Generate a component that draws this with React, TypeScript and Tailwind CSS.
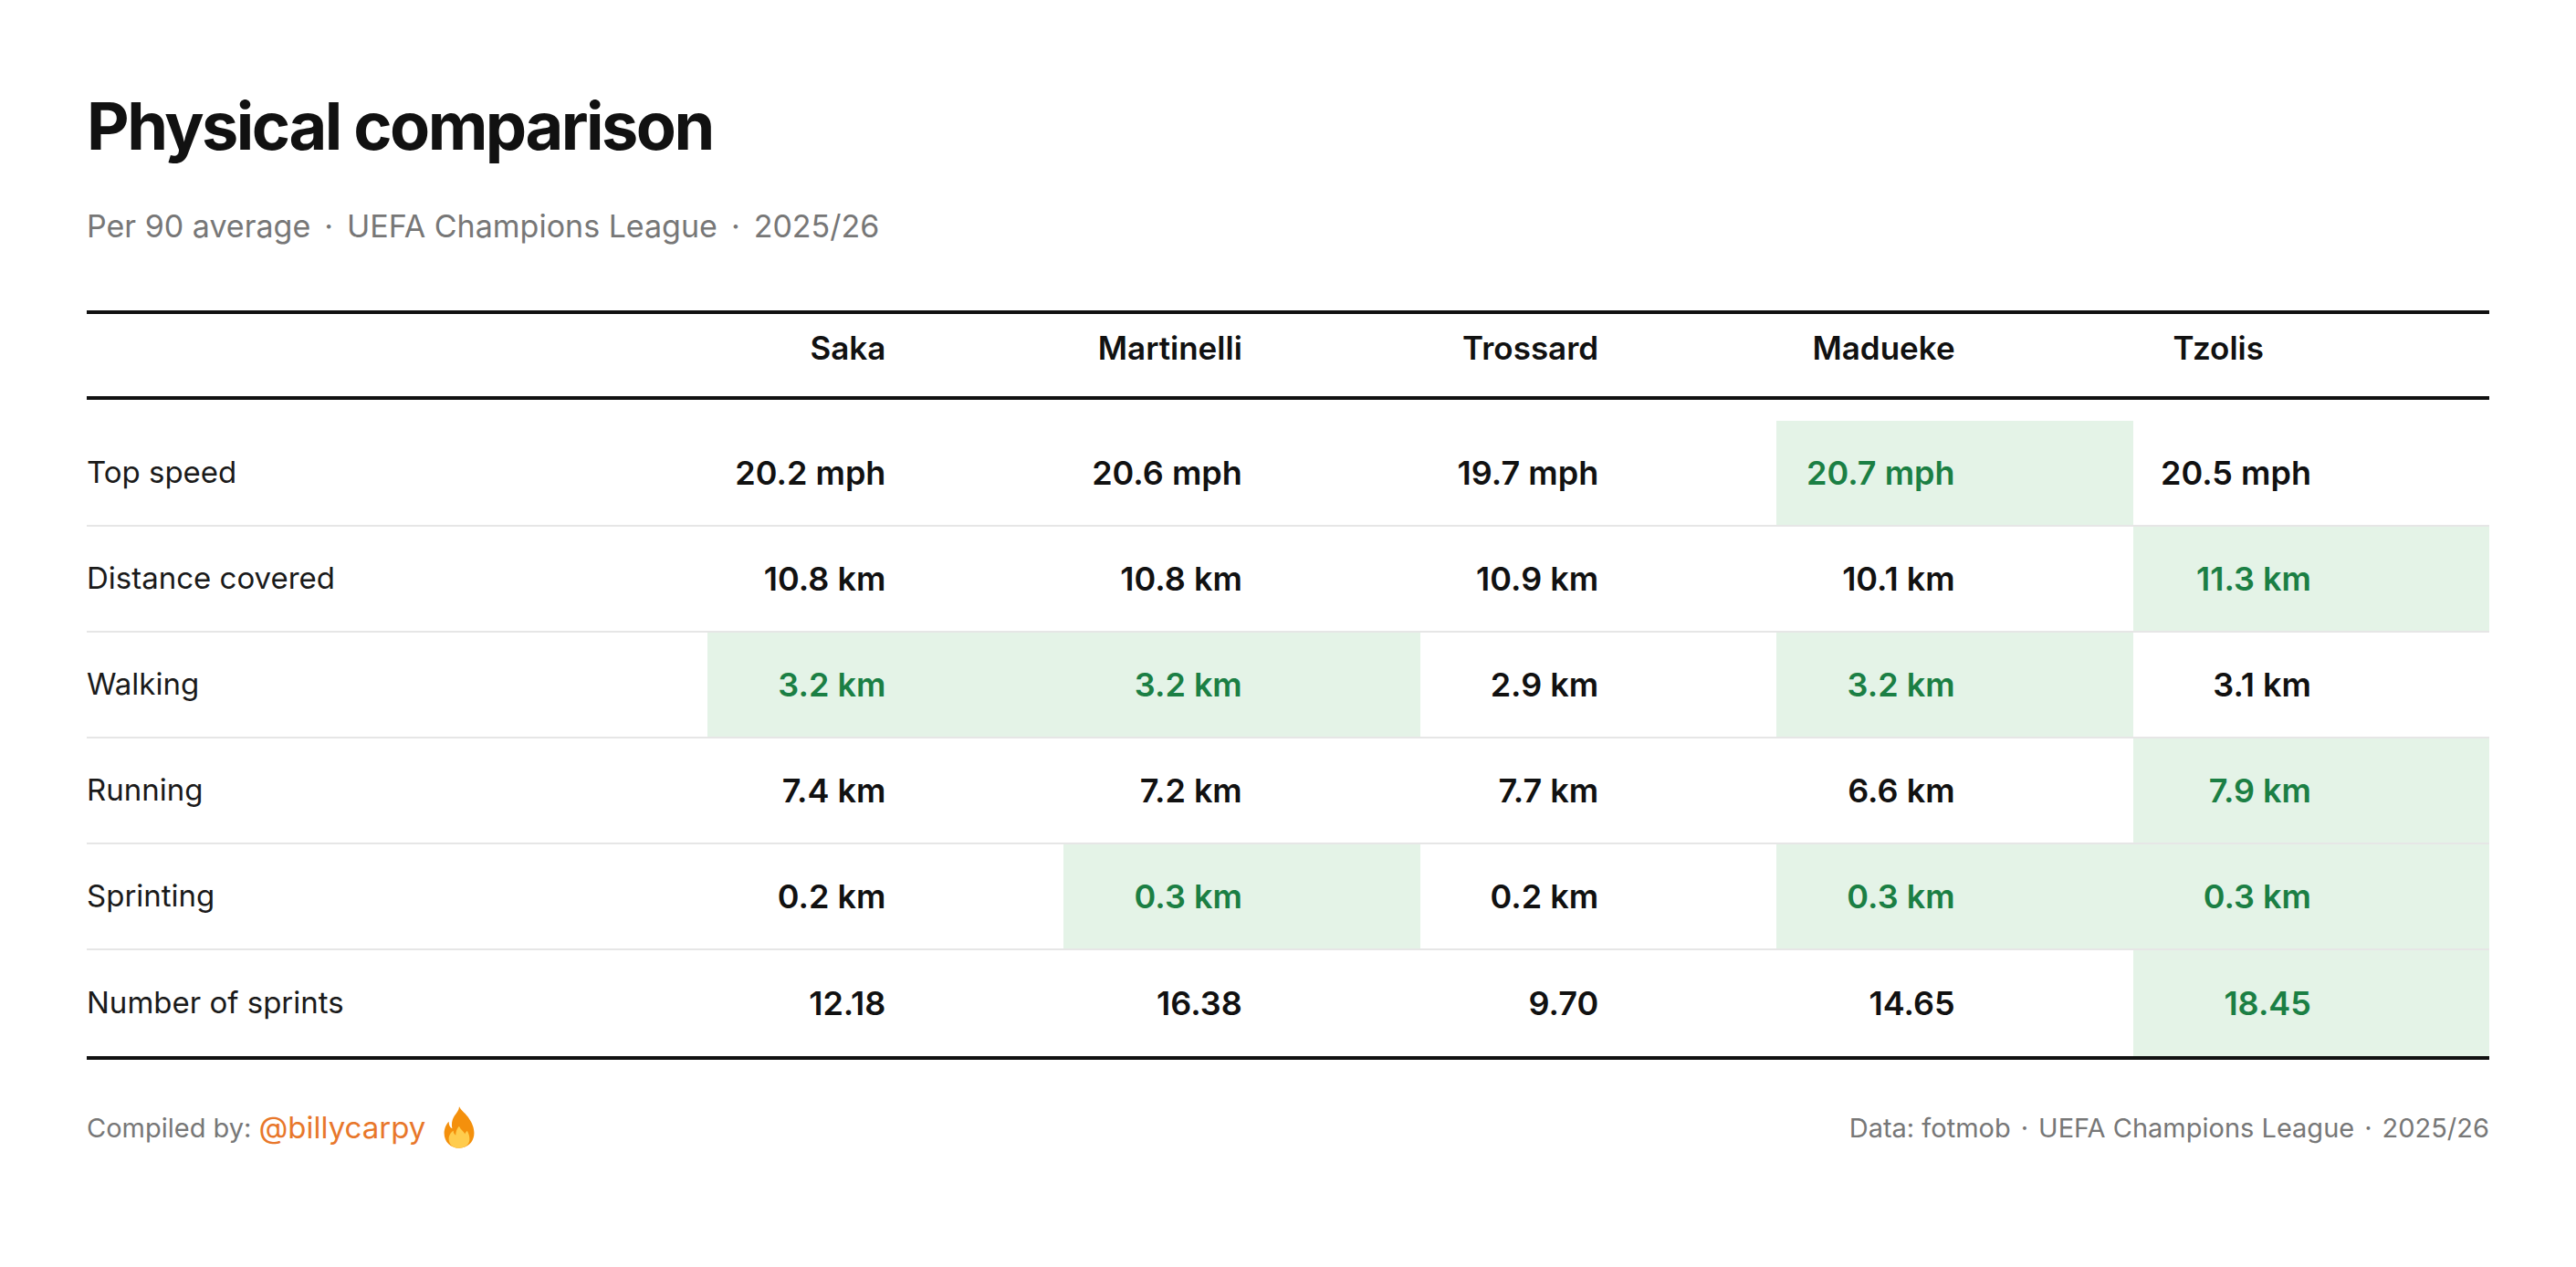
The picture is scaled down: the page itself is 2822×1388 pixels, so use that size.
import React from 'react'

type Cell = { v: string; best?: boolean }
type Row = { label: string; cells: Cell[] }

const players = ['Saka', 'Martinelli', 'Trossard', 'Madueke', 'Tzolis']

const rows: Row[] = [
  { label: 'Top speed', cells: [{ v: '20.2 mph' }, { v: '20.6 mph' }, { v: '19.7 mph' }, { v: '20.7 mph', best: true }, { v: '20.5 mph' }] },
  { label: 'Distance covered', cells: [{ v: '10.8 km' }, { v: '10.8 km' }, { v: '10.9 km' }, { v: '10.1 km' }, { v: '11.3 km', best: true }] },
  { label: 'Walking', cells: [{ v: '3.2 km', best: true }, { v: '3.2 km', best: true }, { v: '2.9 km' }, { v: '3.2 km', best: true }, { v: '3.1 km' }] },
  { label: 'Running', cells: [{ v: '7.4 km' }, { v: '7.2 km' }, { v: '7.7 km' }, { v: '6.6 km' }, { v: '7.9 km', best: true }] },
  { label: 'Sprinting', cells: [{ v: '0.2 km' }, { v: '0.3 km', best: true }, { v: '0.2 km' }, { v: '0.3 km', best: true }, { v: '0.3 km', best: true }] },
  { label: 'Number of sprints', cells: [{ v: '12.18' }, { v: '16.38' }, { v: '9.70' }, { v: '14.65' }, { v: '18.45', best: true }] },
]

// fire emoji, drawn (no emoji font in the sandbox)
function Flame() {
  return (
    <svg width="46" height="48" viewBox="5 0 26 38" className="ml-[14px]">
      <path
        d="M18 1c2 4 6 6 9 11 2 3 4 7 4 12 0 8-6 13-13 13S5 32 5 24c0-4 2-8 4-10 0 3 1 5 3 6-1-4 0-8 2-11 2-3 4-5 4-8z"
        fill="#f4900c"
      />
      <path
        d="M18 37c-5 0-9-3-9-8 0-3 2-6 4-7 0 2 1 3 2 4 0-3 1-6 3-8 1 3 4 4 5 7 0-1 1-2 2-3 1 2 2 4 2 7 0 5-4 8-9 8z"
        fill="#ffcc4d"
      />
    </svg>
  )
}

function Dot({ small }: { small?: boolean }) {
  return <span className={small ? 'mx-[11px]' : 'mx-[15px]'}>·</span>
}

export default function App() {
  return (
    <div className="w-[2822px] h-[1388px] bg-white px-[95px] pt-[102px] font-[Inter,sans-serif] text-[#111]">
      <h1 className="text-[72px] font-bold leading-none tracking-[-0.035em]">Physical comparison</h1>
      <div className="mt-[57px] text-[34px] leading-none text-[#777]">
        Per 90 average<Dot />UEFA Champions League<Dot />2025/26
      </div>

      <div className="mt-[75px]">
        <div className="grid grid-cols-[680px_repeat(5,1fr)] border-t-4 border-b-4 border-[#111] pt-[20px] pb-[35px]">
          <div />
          {players.map((p, i) => (
            <div
              key={p}
              className={
                'text-right text-[35px] font-semibold leading-none ' +
                (i === 4 ? 'pr-[247px]' : 'pr-[195px]')
              }
            >
              {p}
            </div>
          ))}
        </div>

        <div className="mt-[23px] border-b-4 border-[#111]">
          {rows.map((r, ri) => (
            <div
              key={r.label}
              className={
                'grid grid-cols-[680px_repeat(5,1fr)] h-[116px] ' +
                (ri < rows.length - 1 ? 'border-b-2 border-[#e6e6e6]' : '')
              }
            >
              <div className="flex items-center text-[33px] text-[#1a1a1a]">{r.label}</div>
              {r.cells.map((c, ci) => (
                <div
                  key={ci}
                  className={
                    'flex items-center justify-end pr-[195px] text-[36px] font-semibold ' +
                    (c.best ? 'bg-[#e4f3e7] text-[#1b7f44]' : 'text-[#111]')
                  }
                >
                  {c.v}
                </div>
              ))}
            </div>
          ))}
        </div>
      </div>

      <div className="mt-[50px] flex items-center justify-between text-[29px] leading-none text-[#777]">
        <div className="flex items-center">
          <span>Compiled by:</span>
          <span className="ml-[8px] text-[33px] text-[#e8772a]">@billycarpy</span>
          <Flame />
        </div>
        <div>
          Data: fotmob<Dot small />UEFA Champions League<Dot small />2025/26
        </div>
      </div>
    </div>
  )
}
